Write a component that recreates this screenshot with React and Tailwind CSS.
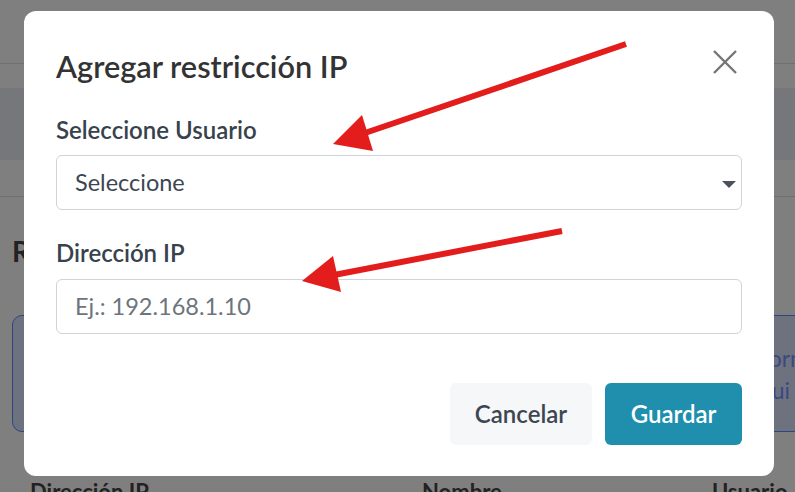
export default function App() {
  return (
    <div className="relative h-[492px] w-full overflow-hidden bg-white font-['Lato','Liberation_Sans',sans-serif]">
      {/* page behind the modal */}
      <div className="h-16 border-b border-[#dedede]" />
      <div className="mt-6 h-[72px] bg-[#eceef4]" />
      <div className="h-[37px] border-b border-[#dedede]" />
      <div className="px-3">
        <h1 className="mt-[36px] text-[28px] font-bold leading-[36px] text-[#444]">Restricciones IP</h1>
        <div className="mt-[46px] flex h-[117px] w-[800px] flex-col items-end justify-center overflow-hidden rounded-[10px] border border-[#5a8cff] bg-[#dce4ff] text-[23px] leading-[32px] text-[#7494ff]">
          <p className="whitespace-nowrap pr-[2px]">Agregue las direcciones IP permitidas para los usuarios y luego inform</p>
          <p className="whitespace-nowrap pr-[21px]">que solo podrán ingresar desde esas direcciones, sin excepción alguna qui</p>
        </div>
        <div className="mt-[46px] grid grid-cols-[392px_290px_1fr] pl-[18px] text-[22px] font-bold leading-[28px] text-[#444]">
          <span>Dirección IP</span>
          <span>Nombre</span>
          <span>Usuario</span>
        </div>
      </div>

      {/* backdrop */}
      <div className="absolute inset-0 bg-black/50" />

      {/* modal */}
      <div className="absolute left-6 top-[11px] w-[750px] rounded-xl bg-white px-8 pt-[38px] pb-[31px]">
        <div className="flex items-start justify-between">
          <h2 className="text-[30.7px] font-semibold leading-[36px] text-[#333]">Agregar restricción IP</h2>
          <button className="mr-[5px] mt-px h-6 w-6 text-[#757575]">
            <svg viewBox="0 0 24 24" width="24" height="24" fill="none" stroke="currentColor" strokeWidth="2.4">
              <path d="M1 1 L23 23 M23 1 L1 23" />
            </svg>
          </button>
        </div>

        <label className="mt-[30px] block text-[24px] font-semibold leading-[30px] text-[#37424d]">Seleccione Usuario</label>
        <div className="relative mt-[10px] flex h-[55px] items-center rounded-md border border-[#ced4da] pl-[18px] text-[23.5px] text-[#3d4650]">
          <span>Seleccione</span>
          <svg className="absolute right-[5px] top-[25px]" width="14" height="7" viewBox="0 0 14 7">
            <path d="M0 0 L14 0 L7 7 Z" fill="#4b525b" />
          </svg>
        </div>

        <label className="mt-[28px] block text-[24px] font-semibold leading-[30px] text-[#37424d]">Dirección IP</label>
        <div className="mt-[11px] flex h-[55px] items-center rounded-md border border-[#ced4da] pl-[18px] text-[23.5px] text-[#6c757d]">
          <span>Ej.: 192.168.1.10</span>
        </div>

        <div className="mt-[49px] flex justify-end gap-[13px]">
          <button className="h-[62px] w-[142px] rounded-md bg-[#f6f7f9] text-[24px] font-semibold text-[#3d4650]">Cancelar</button>
          <button className="h-[62px] w-[137px] rounded-md bg-[#1f8fad] text-[24px] font-semibold text-white">Guardar</button>
        </div>
      </div>

      {/* annotation arrows */}
      <svg className="pointer-events-none absolute inset-0" width="795" height="492" viewBox="0 0 795 492">
        <line x1="626" y1="44" x2="362" y2="134" stroke="#e31c1c" strokeWidth="6" />
        <polygon points="333,144 362,115 373,151" fill="#e31c1c" />
        <line x1="562" y1="231" x2="334" y2="275" stroke="#e31c1c" strokeWidth="6" />
        <polygon points="302,281 333,256 341,292" fill="#e31c1c" />
      </svg>
    </div>
  );
}
